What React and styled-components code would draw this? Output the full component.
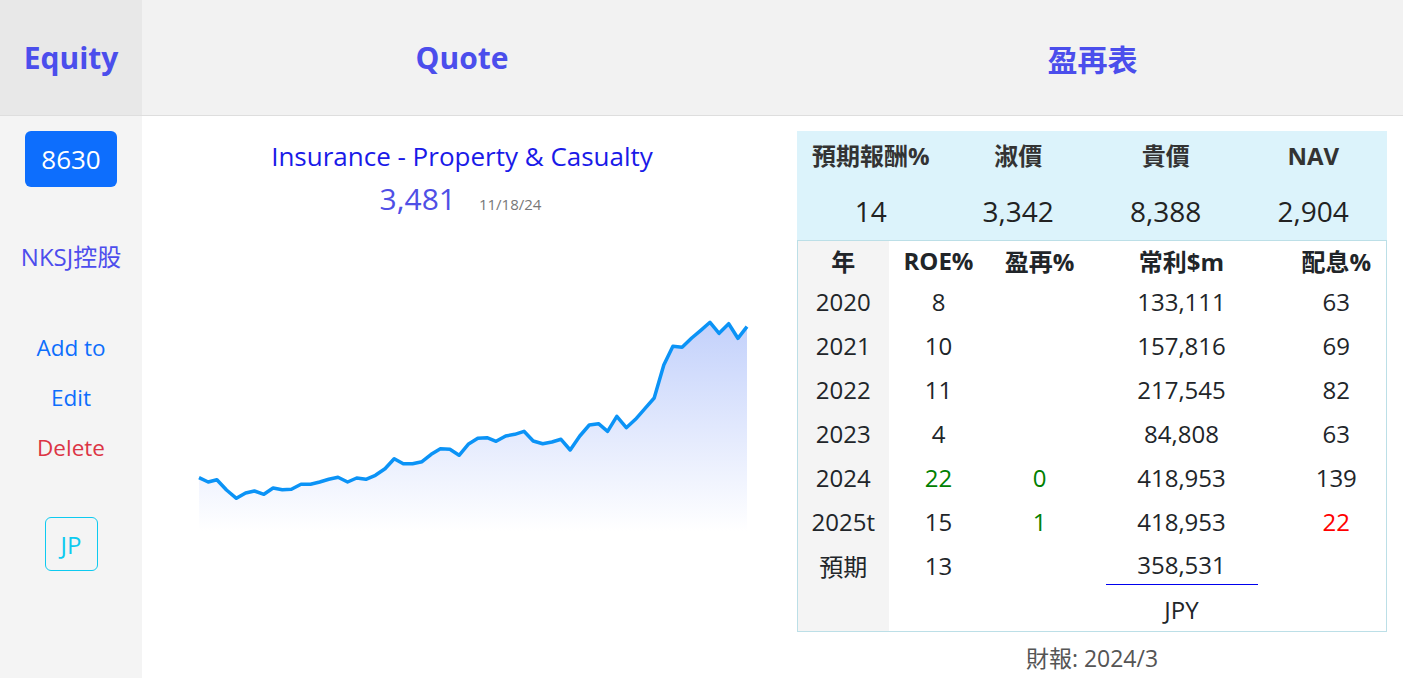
import React from 'react';
import styled, { createGlobalStyle } from 'styled-components';

const GlobalStyle = createGlobalStyle`
    html, body {
        margin: 0;
        padding: 0;
        background: #fff;
        font-family: "Open Sans", "Noto Sans CJK TC", sans-serif;
        color: #212529;
    }
`;

const COLS = '142px 640px 1fr';

const Header = styled.header`
    display: grid;
    grid-template-columns: ${COLS};
    height: 115px;
    background: #f2f2f2;
    border-bottom: 1px solid #dedede;
`;

const HeaderCell = styled.div`
    display: flex;
    align-items: center;
    justify-content: center;
    font-size: 30px;
    font-weight: 700;
    color: #4b4eec;
    background: ${p => (p.$shade ? '#e8e8e8' : 'transparent')};
`;

const Body = styled.main`
    display: grid;
    grid-template-columns: ${COLS};
    min-height: calc(100vh - 116px);
`;

const Sidebar = styled.aside`
    background: #f4f4f4;
    display: flex;
    flex-direction: column;
    align-items: center;
    padding-top: 15px;
`;

const CodeButton = styled.button`
    width: 92px;
    height: 56px;
    border: none;
    border-radius: 6px;
    background: #0d6efd;
    color: #fff;
    font-family: inherit;
    font-size: 26px;
`;

const SideLink = styled.div`
    font-size: ${p => p.$size || 22.5}px;
    line-height: 50px;
    color: ${p => p.$color || '#0d6efd'};
    margin-top: ${p => p.$gap || 0}px;
`;

const OutlineButton = styled.button`
    width: 53px;
    height: 54px;
    margin-top: 44px;
    padding: 0;
    border: 1px solid #0dcaf0;
    border-radius: 6px;
    background: transparent;
    color: #0dcaf0;
    font-family: inherit;
    font-size: 24px;
`;

const QuoteCol = styled.section`
    display: flex;
    flex-direction: column;
    align-items: center;
    padding-top: 22px;
`;

const Industry = styled.div`
    font-size: 26px;
    line-height: 36px;
    color: #1a1ae8;
`;

const PriceRow = styled.div`
    display: flex;
    align-items: baseline;
    gap: 23px;
    line-height: 50px;
    margin-left: -3px;
`;

const Price = styled.span`
    font-size: 30px;
    color: #4f4fe6;
`;

const PriceDate = styled.span`
    font-size: 15px;
    color: #777;
`;

const Chart = styled.svg`
    display: block;
    margin-top: 72px;
    align-self: stretch;
`;

const RightCol = styled.section`
    padding: 15px 16px 0 15px;
`;

const Summary = styled.div`
    display: grid;
    grid-template-columns: repeat(4, 1fr);
    grid-template-rows: 52px 57px;
    background: #dcf3fb;
    text-align: center;
`;

const SummaryLabel = styled.div`
    font-size: 24px;
    font-weight: 700;
    color: #333;
    line-height: 50px;
`;

const SummaryValue = styled.div`
    font-size: 28px;
    color: #222;
    line-height: 56px;
`;

const Table = styled.table`
    width: 100%;
    border-collapse: collapse;
    border: 1px solid #bcdfe7;
    table-layout: fixed;
    font-size: 24px;
    text-align: center;
`;

const Th = styled.th`
    height: 38px;
    padding: 0 0 0 ${p => p.$shift || 0}px;
    font-weight: 700;
    background: ${p => (p.$side ? '#f4f4f4' : 'transparent')};
`;

const Td = styled.td`
    height: 44px;
    padding: 0 0 0 ${p => p.$shift || 0}px;
    color: ${p => p.$color || '#212529'};
    background: ${p => (p.$side ? '#f4f4f4' : 'transparent')};
`;

const Underlined = styled.div`
    margin: 0 15px;
    line-height: 38px;
    border-bottom: 1px solid #0000ee;
`;

const Footnote = styled.div`
    text-align: center;
    font-size: 23px;
    color: #555;
    line-height: 52px;
`;

// trace of the price line, raw coordinates read from the screenshot
const RAW = [
    [48, 530], [72, 543], [95, 536], [120, 567], [146, 592], [170, 576], [193, 570], [218, 580],
    [242, 561], [266, 566], [290, 565], [315, 550], [340, 550], [364, 543], [388, 535], [412, 529],
    [437, 543], [461, 531], [485, 535], [510, 523], [535, 503], [559, 473], [583, 488], [607, 488],
    [632, 482], [656, 460], [680, 443], [705, 445], [729, 463], [753, 430], [778, 412], [802, 410],
    [826, 421], [851, 405], [875, 400], [899, 391], [923, 420], [948, 428], [972, 423], [996, 415],
    [1020, 447], [1045, 405], [1070, 372], [1094, 368], [1118, 391], [1142, 346], [1167, 380],
    [1191, 355], [1216, 322], [1240, 291], [1265, 192], [1289, 136], [1313, 139], [1338, 111],
    [1362, 88], [1386, 64], [1410, 97], [1435, 68], [1459, 112], [1483, 77],
];

const pts = RAW.map(([x, y]) => [57 + (x - 48) * 0.3819, y / 3]);
const linePath = pts.map(([x, y], i) => `${i ? 'L' : 'M'}${x.toFixed(1)} ${y.toFixed(1)}`).join(' ');
const areaPath = `${linePath} L${pts[pts.length - 1][0].toFixed(1)} 230 L${pts[0][0].toFixed(1)} 230 Z`;

const rows = [
    { y: '2020', roe: '8', re: '', p: '133,111', d: '63' },
    { y: '2021', roe: '10', re: '', p: '157,816', d: '69' },
    { y: '2022', roe: '11', re: '', p: '217,545', d: '82' },
    { y: '2023', roe: '4', re: '', p: '84,808', d: '63' },
    { y: '2024', roe: '22', roeC: '#008000', re: '0', p: '418,953', d: '139' },
    { y: '2025t', roe: '15', re: '1', p: '418,953', d: '22', dC: '#ff0000' },
];

export default function App() {
    return (
        <>
            <GlobalStyle />
            <Header>
                <HeaderCell $shade>Equity</HeaderCell>
                <HeaderCell>Quote</HeaderCell>
                <HeaderCell>盈再表</HeaderCell>
            </Header>
            <Body>
                <Sidebar>
                    <CodeButton>8630</CodeButton>
                    <SideLink $color="#4d4ded" $size={24} $gap={45}>NKSJ控股</SideLink>
                    <SideLink $gap={41}>Add to</SideLink>
                    <SideLink>Edit</SideLink>
                    <SideLink $color="#dc3545">Delete</SideLink>
                    <OutlineButton>JP</OutlineButton>
                </Sidebar>

                <QuoteCol>
                    <Industry>Insurance - Property &amp; Casualty</Industry>
                    <PriceRow>
                        <Price>3,481</Price>
                        <PriceDate>11/18/24</PriceDate>
                    </PriceRow>
                    <Chart width="640" height="240" viewBox="0 0 640 240">
                        <defs>
                            <linearGradient id="fillGrad" x1="0" y1="0" x2="0" y2="1">
                                <stop offset="0%" stopColor="#c3d1fb" />
                                <stop offset="100%" stopColor="#ffffff" />
                            </linearGradient>
                        </defs>
                        <path d={areaPath} fill="url(#fillGrad)" />
                        <path d={linePath} fill="none" stroke="#0b93f6" strokeWidth="3.5" strokeLinejoin="round" />
                    </Chart>
                </QuoteCol>

                <RightCol>
                    <Summary>
                        <SummaryLabel>預期報酬%</SummaryLabel>
                        <SummaryLabel>淑價</SummaryLabel>
                        <SummaryLabel>貴價</SummaryLabel>
                        <SummaryLabel>NAV</SummaryLabel>
                        <SummaryValue>14</SummaryValue>
                        <SummaryValue>3,342</SummaryValue>
                        <SummaryValue>8,388</SummaryValue>
                        <SummaryValue>2,904</SummaryValue>
                    </Summary>
                    <Table>
                        <colgroup>
                            <col style={{ width: 91 }} />
                            <col style={{ width: 100 }} />
                            <col style={{ width: 102 }} />
                            <col style={{ width: 182 }} />
                            <col />
                        </colgroup>
                        <thead>
                            <tr>
                                <Th $side>年</Th>
                                <Th>ROE%</Th>
                                <Th>盈再%</Th>
                                <Th>常利$m</Th>
                                <Th $shift={14}>配息%</Th>
                            </tr>
                        </thead>
                        <tbody>
                            {rows.map(r => (
                                <tr key={r.y}>
                                    <Td $side>{r.y}</Td>
                                    <Td $color={r.roeC}>{r.roe}</Td>
                                    <Td $color="#008000">{r.re}</Td>
                                    <Td>{r.p}</Td>
                                    <Td $shift={14} $color={r.dC}>{r.d}</Td>
                                </tr>
                            ))}
                            <tr>
                                <Td $side>預期</Td>
                                <Td>13</Td>
                                <Td />
                                <Td><Underlined>358,531</Underlined></Td>
                                <Td />
                            </tr>
                            <tr>
                                <Td $side />
                                <Td />
                                <Td />
                                <Td>JPY</Td>
                                <Td />
                            </tr>
                        </tbody>
                    </Table>
                    <Footnote>財報: 2024/3</Footnote>
                </RightCol>
            </Body>
        </>
    );
}
